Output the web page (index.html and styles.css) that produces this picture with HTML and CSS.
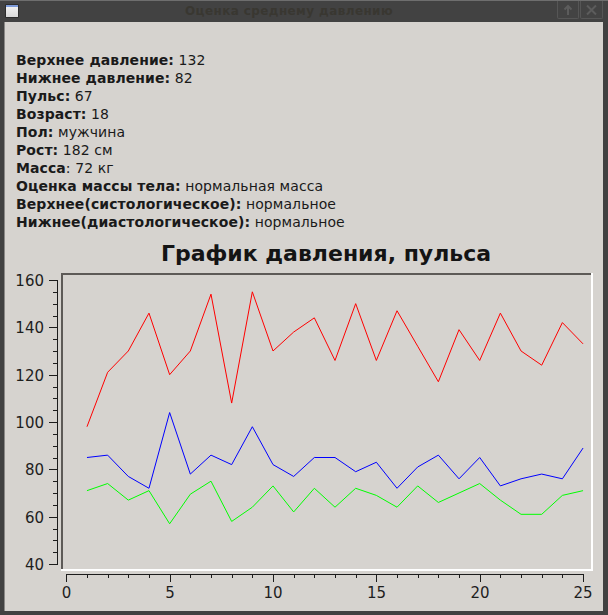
FILE: index.html
```html
<!DOCTYPE html>
<html lang="ru">
<head>
<meta charset="utf-8">
<title>Оценка среднему давлению</title>
<link rel="stylesheet" href="styles.css">
</head>
<body>
<div class="window">
  <div class="titlebar">
    <div class="app-icon"><div class="app-icon-strip"></div></div>
    <div class="title">Оценка среднему давлению</div>
    <div class="buttons">
      <div class="tbtn tbtn-up">
        <svg width="20" height="17" viewBox="0 0 20 17"><path d="M10 14V5M6.5 8.5L10 5L13.5 8.5" fill="none" stroke="#5c5c5c" stroke-width="2"/></svg>
      </div>
      <div class="tbtn tbtn-close">
        <svg width="21" height="17" viewBox="0 0 21 17"><path d="M6 4.5L15 13.5M15 4.5L6 13.5" fill="none" stroke="#5c5c5c" stroke-width="2"/></svg>
      </div>
    </div>
  </div>
  <div class="frame">
    <div class="content">
      <div class="info">
        <div class="row"><b>Верхнее давление:</b> 132</div>
        <div class="row"><b>Нижнее давление:</b> 82</div>
        <div class="row"><b>Пульс:</b> 67</div>
        <div class="row"><b>Возраст:</b> 18</div>
        <div class="row"><b>Пол:</b> мужчина</div>
        <div class="row"><b>Рост:</b> 182 см</div>
        <div class="row"><b>Масса</b>: 72 кг</div>
        <div class="row"><b>Оценка массы тела:</b> нормальная масса</div>
        <div class="row"><b>Верхнее(систологическое):</b> нормальное</div>
        <div class="row"><b>Нижнее(диастологическое):</b> нормальное</div>
      </div>
      <div class="chart-title">График давления, пульса</div>
      <svg class="chart" width="599" height="344" viewBox="4 267 599 344">
        <!-- sunken plot frame -->
        <g shape-rendering="crispEdges">
          <rect x="61" y="273" width="532" height="2" fill="#5d5a57"/>
          <rect x="61" y="273" width="2" height="298" fill="#5d5a57"/>
          <rect x="61" y="569" width="532" height="2" fill="#ffffff"/>
          <rect x="591" y="273" width="2" height="298" fill="#ffffff"/>
        </g>
        <!-- axes -->
        <g fill="none" stroke="#1c1c1c" stroke-width="1" shape-rendering="crispEdges">
          <path d="M57.5 280V564.5"/>
          <path d="M49 280.5H58M49 327.5H58M49 375.5H58M49 422.5H58M49 469.5H58M49 517.5H58M49 564.5H58"/>
          <path d="M53 292.5H58M53 304.5H58M53 316.5H58M53 339.5H58M53 351.5H58M53 363.5H58M53 387.5H58M53 398.5H58M53 410.5H58M53 434.5H58M53 446.5H58M53 458.5H58M53 481.5H58M53 493.5H58M53 505.5H58M53 529.5H58M53 540.5H58M53 552.5H58"/>
          <path d="M66 574.5H584"/>
          <path d="M66.5 574V582M170.5 574V582M273.5 574V582M376.5 574V582M480.5 574V582M583.5 574V582"/>
          <path d="M87.5 574V578M108.5 574V578M128.5 574V578M149.5 574V578M190.5 574V578M211.5 574V578M232.5 574V578M252.5 574V578M294.5 574V578M314.5 574V578M335.5 574V578M356.5 574V578M397.5 574V578M418.5 574V578M438.5 574V578M459.5 574V578M500.5 574V578M521.5 574V578M542.5 574V578M562.5 574V578"/>
        </g>
        <g class="ylabels" text-anchor="end">
          <text x="44" y="285.5">160</text>
          <text x="44" y="332.5">140</text>
          <text x="44" y="380.5">120</text>
          <text x="44" y="427.5">100</text>
          <text x="44" y="474.5">80</text>
          <text x="44" y="522.5">60</text>
          <text x="44" y="569.5">40</text>
        </g>
        <g class="xlabels" text-anchor="middle">
          <text x="66.5" y="598">0</text>
          <text x="170" y="598">5</text>
          <text x="273" y="598">10</text>
          <text x="376.5" y="598">15</text>
          <text x="480" y="598">20</text>
          <text x="583" y="598">25</text>
        </g>
        <!-- data series -->
        <g transform="translate(66.3 658.7) scale(20.67 -2.367)" fill="none">
          <polyline vector-effect="non-scaling-stroke" stroke="#ff0000" stroke-width="1" points="1,98 2,121 3,130 4,146 5,120 6,130 7,154 8,108 9,155 10,130 11,138 12,144 13,126 14,150 15,126 16,147 17,132 18,117 19,139 20,126 21,146 22,130 23,124 24,142 25,133"/>
          <polyline vector-effect="non-scaling-stroke" stroke="#0000ff" stroke-width="1" points="1,85 2,86 3,77 4,72 5,104 6,78 7,86 8,82 9,98 10,82 11,77 12,85 13,85 14,79 15,83 16,72 17,81 18,86 19,76 20,85 21,73 22,76 23,78 24,76 25,89"/>
          <polyline vector-effect="non-scaling-stroke" stroke="#00ff00" stroke-width="1" points="1,71 2,74 3,67 4,71 5,57 6,69.5 7,75 8,58 9,64 10,73 11,62 12,72 13,64 14,72 15,69 16,64 17,73 18,66 19,70 20,74 21,67 22,61 23,61 24,69 25,71"/>
        </g>
      </svg>
    </div>
  </div>
</div>
</body>
</html>
```
FILE: styles.css
```css
html, body {
  margin: 0;
  padding: 0;
  background: #3e3e3e;
}
.window {
  width: 608px;
  height: 615px;
  box-sizing: border-box;
  background: #414141;
  border-top: 1px solid #6e6e6e;
  display: flex;
  flex-direction: column;
  font-family: "DejaVu Sans", sans-serif;
  overflow: hidden;
}
.titlebar {
  height: 21px;
  display: flex;
  align-items: flex-start;
  background: #424242;
}
.app-icon {
  width: 14px;
  height: 14px;
  margin: 3px 0 0 5px;
  background: linear-gradient(#f4f4f4, #d9d9d9);
  border: 1px solid #2c2c2c;
  box-sizing: border-box;
  border-radius: 1px;
}
.app-icon-strip {
  height: 2px;
  background: #7d9ad8;
}
.title {
  flex: 1;
  text-align: center;
  font-weight: bold;
  font-size: 12px;
  letter-spacing: 0.4px;
  line-height: 20px;
  color: #393731;
  padding-left: 2px;
}
.buttons {
  display: flex;
  gap: 1px;
  margin-right: 5px;
}
.tbtn {
  height: 18px;
  border: 1px solid #565656;
  border-top: none;
  border-radius: 0 0 2px 2px;
  box-sizing: border-box;
  display: flex;
  background: #434343;
}
.tbtn-up {
  width: 22px;
}
.tbtn-close {
  width: 23px;
}
.tbtn svg {
  display: block;
}
.frame {
  flex: 1;
  display: flex;
  padding: 0 5px 4px 4px;
}
.content {
  flex: 1;
  background: #d6d3cf;
  box-shadow: inset 1px 0 0 #8a8886;
  color: #1a1a1a;
  display: flex;
  flex-direction: column;
}
.info {
  padding: 29px 0 0 12px;
  font-size: 14px;
  line-height: 18px;
  letter-spacing: 0.08px;
}
.info b {
  font-weight: bold;
}
.chart-title {
  margin-top: 10px;
  font-size: 22px;
  line-height: 26px;
  font-weight: bold;
  text-align: center;
  padding-left: 45px;
  color: #141414;
}
.chart {
  display: block;
}
.ylabels text, .xlabels text {
  font-family: "DejaVu Sans", sans-serif;
  font-size: 15px;
  fill: #1e1e1e;
}
```
